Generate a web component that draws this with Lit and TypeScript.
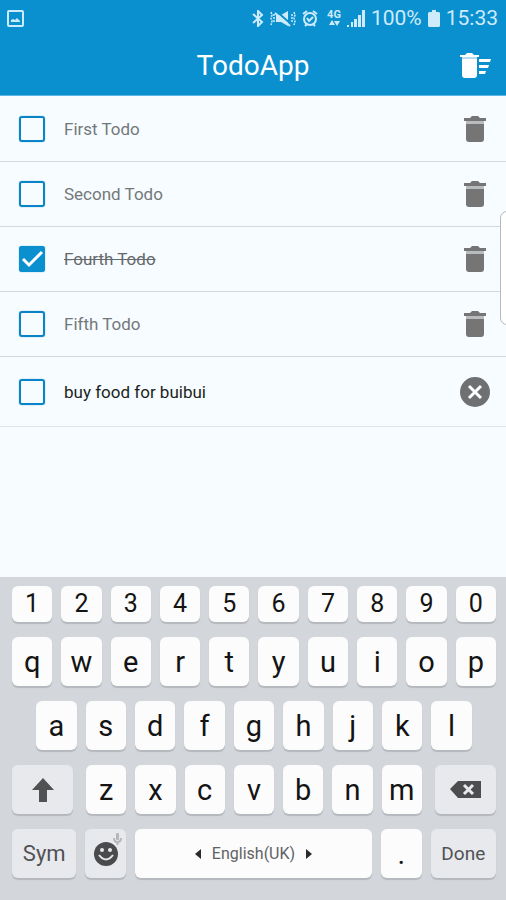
import { LitElement, html, svg, css, nothing } from "lit";
import { customElement, property, state } from "lit/decorators.js";
import { classMap } from "lit/directives/class-map.js";

interface Todo {
  id: number;
  title: string;
  done: boolean;
}

const trashShape = svg`
  <path fill="#757575" d="M2 8h18v15a3 3 0 0 1-3 3H5a3 3 0 0 1-3-3z"/>
  <path fill="#b9bcbd" d="M2 5h18v3H2z"/>
  <path fill="#757575" d="M0 2h6l2-2h6l2 2h6v3H0z"/>`;

@customElement("status-bar")
class StatusBar extends LitElement {
  static styles = css`
    :host {
      display: flex;
      align-items: center;
      height: 36px;
      padding: 0 8px 0 7px;
      color: #cdebfb;
      fill: #cdebfb;
      font-size: 21px;
      line-height: 24px;
    }
    svg { display: block; flex: none; }
    .right { display: flex; align-items: center; gap: 6px; margin-left: auto; }
    .net { display: flex; flex-direction: column; align-items: center; margin-left: 3px; }
    .net span { font-size: 11px; line-height: 10px; font-weight: 700; }
    .line { fill: none; stroke: #cdebfb; }
  `;
  render() {
    return html`
      <svg width="17" height="17" viewBox="0 0 17 17">
        <rect class="line" x="1" y="1" width="15" height="15" rx="1" stroke-width="2" />
        <path d="M4 12v-2l2-1 2 1 2-2 3 3v1z" />
      </svg>
      <div class="right">
        <svg width="12" height="17" viewBox="0 0 12 17">
          <path class="line" stroke-width="2" d="M1 4l9 8-4 4V1l4 4-9 8" />
        </svg>
        <svg width="26" height="17" viewBox="0 0 26 17">
          <path d="M6 5h5l7-4v15l-7-4H6z" />
          <path class="line" stroke-width="1.500" stroke-dasharray="2 1" d="M1 2l1 3-1 3 1 3-1 4M4 4v9M22 4v9M24 2l1 3-1 3 1 3-1 4" />
          <path stroke="#0a8fcf" stroke-width="2" d="M6 1l15 13" />
          <path class="line" stroke-width="2" d="M5 3l15 13" />
        </svg>
        <svg width="16" height="17" viewBox="0 0 16 17">
          <circle class="line" cx="8" cy="9" r="6" stroke-width="2" />
          <path class="line" stroke-width="2" d="M1 4l4-3M11 1l4 3M3 16l2-2M13 16l-2-2" />
          <path class="line" stroke-width="2" d="M5 8l2 3 4-4" />
        </svg>
        <div class="net">
          <span>4G</span>
          <svg width="11" height="7" viewBox="0 0 11 7">
            <path d="M3 0l3 5H0zM8 6L5 1h6z" />
          </svg>
        </div>
        <svg width="18" height="17" viewBox="0 0 18 17">
          <path d="M0 15h2v2H0zM4 12h2v5H4zM7 9h3v8H7zM11 5h3v12h-3zM15 0h3v17h-3z" />
        </svg>
        <span>100%</span>
        <svg width="12" height="17" viewBox="0 0 12 17">
          <path d="M4 0h4v2h3l1 1v13l-1 1H1l-1-1V3l1-1h3z" />
        </svg>
        <span>15:33</span>
      </div>
    `;
  }
}

@customElement("todo-row")
class TodoRow extends LitElement {
  @property({ attribute: false }) todo!: Todo;
  @property({ type: Boolean }) editing = false;

  static styles = css`
    :host {
      display: flex;
      align-items: center;
      box-sizing: border-box;
      height: 65px;
      padding: 0 13px 0 19px;
      border-bottom: 1px solid #d3d9dc;
    }
    :host([editing]) { height: 70px; border-color: #dfe6e9; }
    .box { display: grid; flex: none; }
    .box > * { grid-area: 1 / 1; }
    input[type="checkbox"] {
      appearance: none;
      width: 26px;
      height: 26px;
      margin: 0;
      border: 2px solid #0a84c6;
      border-radius: 3px;
      box-shadow: 0 0 1px #1388ca;
    }
    input[type="checkbox"]:checked { background: #0a8fcf; border-color: #0a8fcf; }
    .tick { pointer-events: none; fill: none; stroke: #fff; stroke-width: 3; }
    .title {
      flex: 1;
      min-width: 0;
      margin-left: 19px;
      color: #74787a;
      font: 17px/24px Roboto, sans-serif;
    }
    .done { text-decoration: line-through; color: #666a6c; }
    input.title { padding: 0; border: 0; outline: 0; background: none; color: #1c1f20; }
    button { display: grid; place-items: center; width: 36px; height: 40px; padding: 0; border: 0; background: none; }
    svg { display: block; }
  `;

  private toggle() {
    this.dispatchEvent(new CustomEvent("toggle", { detail: this.todo.id }));
  }
  private remove() {
    this.dispatchEvent(new CustomEvent("remove", { detail: this.todo.id }));
  }

  render() {
    const { title, done } = this.todo;
    return html`
      <div class="box">
        <input id="check" type="checkbox" aria-label=${title} .checked=${done} @change=${this.toggle} />
        ${done ? html`<svg class="tick" width="26" height="26" viewBox="0 0 26 26"><path d="M4 13l6 6L23 6" /></svg>` : nothing}
      </div>
      ${this.editing
        ? html`<input class="title" type="text" aria-label="Todo" .value=${title} />`
        : html`<label for="check" class=${classMap({ title: true, done })}>${title}</label>`}
      <button aria-label=${this.editing ? "Cancel" : "Delete"} @click=${this.remove}>
        ${this.editing
          ? html`<svg width="30" height="30" viewBox="0 0 30 30">
              <circle cx="15" cy="15" r="15" fill="#6f7071" />
              <path d="M9 9l12 12M21 9L9 21" stroke="#fff" stroke-width="3" />
            </svg>`
          : html`<svg width="22" height="26" viewBox="0 0 22 26">${trashShape}</svg>`}
      </button>
    `;
  }
}

@customElement("soft-keyboard")
class SoftKeyboard extends LitElement {
  static styles = css`
    :host {
      display: flex;
      flex-direction: column;
      gap: 15px;
      padding: 9px 10px 22px 12px;
      background: #d3d6db;
    }
    .row { display: flex; gap: 9px; }
    .home { padding: 0 5%; }
    .lower { display: grid; grid-template-columns: 61fr 336fr 61fr; gap: 13px; }
    .bottom { display: grid; grid-template-columns: 64fr 40fr 236fr 40fr 65fr; gap: 9px; }
    button {
      display: flex;
      align-items: center;
      justify-content: center;
      flex: 1 1 0;
      min-width: 0;
      height: 49px;
      padding: 0;
      border: 0;
      border-radius: 6px;
      background: #fcfcfd;
      box-shadow: 0 2px 1px #b4b8bd;
      color: #141414;
      font: 29px/32px Roboto, sans-serif;
    }
    .digits button { height: 36px; font-size: 25px; }
    button.mod { background: #e8e9ed; color: #505254; font-size: 22px; }
    button.mod.done { font-size: 19px; }
    button.space { gap: 11px; color: #606264; font-size: 16px; }
    button.emoji { position: relative; }
    .mic { position: absolute; top: 4px; right: 4px; }
    svg { display: block; }
  `;

  private keys(chars: string) {
    return [...chars].map((c) => html`<button>${c}</button>`);
  }

  render() {
    return html`
      <div class="row digits">${this.keys("1234567890")}</div>
      <div class="row">${this.keys("qwertyuiop")}</div>
      <div class="row home">${this.keys("asdfghjkl")}</div>
      <div class="lower">
        <button class="mod" aria-label="Shift">
          <svg width="22" height="24" viewBox="0 0 22 24"><path fill="#505152" d="M11 0l11 12h-7v12H7V12H0z" /></svg>
        </button>
        <div class="row">${this.keys("zxcvbnm")}</div>
        <button class="mod" aria-label="Backspace">
          <svg width="31" height="17" viewBox="0 0 31 17">
            <path fill="#4c4d4e" d="M0 8l8-8h23v17H8z" />
            <path d="M14 4l9 9M23 4l-9 9" stroke="#e8e9ed" stroke-width="3" />
          </svg>
        </button>
      </div>
      <div class="bottom">
        <button class="mod">Sym</button>
        <button class="mod emoji" aria-label="Emoji">
          <svg width="24" height="24" viewBox="0 0 24 24">
            <circle cx="12" cy="12" r="12" fill="#4a4b4c" />
            <circle cx="8" cy="8" r="2" fill="#e8e9ed" />
            <circle cx="16" cy="8" r="2" fill="#e8e9ed" />
            <path d="M5 13q7 9 14 0" fill="none" stroke="#e8e9ed" stroke-width="2" />
          </svg>
          <svg class="mic" width="9" height="12" viewBox="0 0 9 12">
            <rect x="3" y="0" width="3" height="7" rx="1" fill="#b4b6b9" />
            <path d="M1 5q0 4 3.500 4T8 5M4.500 9v3" fill="none" stroke="#b4b6b9" stroke-width="2" />
          </svg>
        </button>
        <button class="space">
          <svg width="6" height="10" viewBox="0 0 6 10"><path fill="#2b2b2b" d="M6 0v10L0 5z" /></svg>
          English(UK)
          <svg width="6" height="10" viewBox="0 0 6 10"><path fill="#2b2b2b" d="M0 0v10l6-5z" /></svg>
        </button>
        <button>.</button>
        <button class="mod done">Done</button>
      </div>
    `;
  }
}

@customElement("app-root")
class AppRoot extends LitElement {
  @state() private todos: Todo[] = [
    { id: 1, title: "First Todo", done: false },
    { id: 2, title: "Second Todo", done: false },
    { id: 4, title: "Fourth Todo", done: true },
    { id: 5, title: "Fifth Todo", done: false },
    { id: 6, title: "buy food for buibui", done: false },
  ];
  private editingId = 6;

  static styles = css`
    :host {
      position: relative;
      display: flex;
      flex-direction: column;
      min-height: 100vh;
      background: #f6fcff;
      font-family: Roboto, sans-serif;
      overflow: hidden;
    }
    header { background: #0a8fcf; border-bottom: 1px solid #5cb6e2; }
    .bar { display: grid; grid-template-columns: 1fr auto 1fr; align-items: center; height: 59px; padding: 0 15px; }
    h1 { grid-column: 2; margin: 0; color: #fff; font-size: 28px; line-height: 36px; font-weight: 400; }
    .clear { justify-self: end; padding: 0; border: 0; background: none; }
    svg { display: block; }
    main { flex: 1; padding-top: 1px; }
    .edge {
      position: absolute;
      top: 211px;
      right: -8px;
      width: 12px;
      height: 112px;
      border: 1px solid #b5b9bb;
      border-radius: 10px;
      background: #fff;
    }
  `;

  private toggle(e: CustomEvent<number>) {
    this.todos = this.todos.map((t) => (t.id === e.detail ? { ...t, done: !t.done } : t));
  }
  private remove(e: CustomEvent<number>) {
    this.todos = this.todos.filter((t) => t.id !== e.detail);
  }
  private clearDone() {
    this.todos = this.todos.filter((t) => !t.done);
  }

  render() {
    return html`
      <header>
        <status-bar></status-bar>
        <div class="bar">
          <h1>TodoApp</h1>
          <button class="clear" aria-label="Clear completed" @click=${this.clearDone}>
            <svg width="31" height="25" viewBox="0 0 31 25">
              <path fill="#fff" d="M2 6h15v16a3 3 0 0 1-3 3H5a3 3 0 0 1-3-3zM0 2h5l2-2h5l2 2h5v2H0zM19 6h12l-1 3H19zM19 12h10l-1 3h-9zM19 18h7l-1 3h-6z" />
              <path fill="#b5dcf1" d="M2 4h15v2H2z" />
            </svg>
          </button>
        </div>
      </header>
      <main>
        ${this.todos.map(
          (t) => html`<todo-row .todo=${t} ?editing=${t.id === this.editingId} @toggle=${this.toggle} @remove=${this.remove}></todo-row>`
        )}
      </main>
      <div class="edge"></div>
      <soft-keyboard></soft-keyboard>
    `;
  }
}
